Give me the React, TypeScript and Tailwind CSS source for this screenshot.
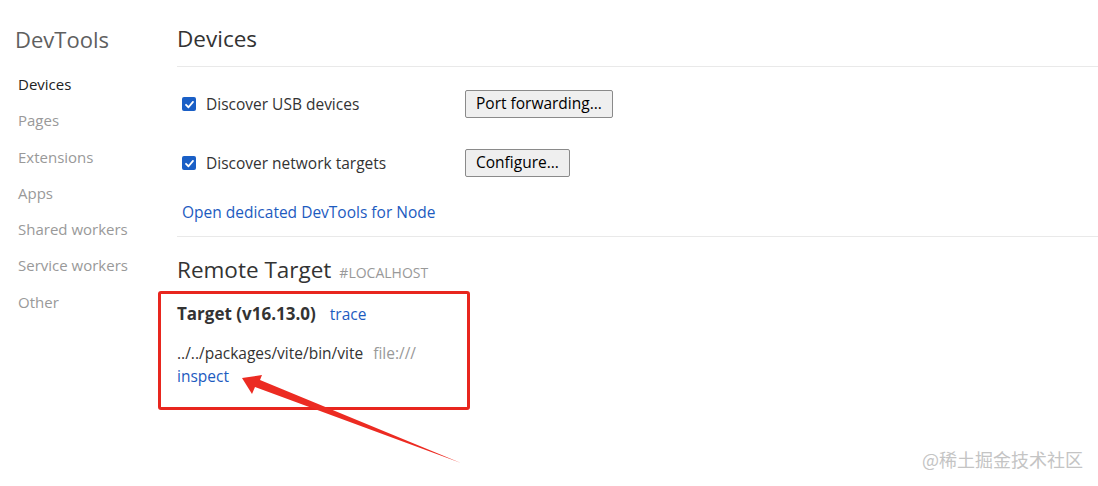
import React from "react";

const font = { fontFamily: '"Open Sans", "Noto Sans", "Noto Sans CJK SC", sans-serif' };

function Check() {
  return (
    <span className="flex h-[14px] w-[14px] shrink-0 items-center justify-center rounded-[2px] bg-[#1a5fc6]">
      <svg width="11" height="11" viewBox="0 0 12 12">
        <path d="M2.2 6.3 L4.9 9 L9.8 3.2" fill="none" stroke="white" strokeWidth="2" strokeLinecap="round" strokeLinejoin="round" />
      </svg>
    </span>
  );
}

function Row({ label, button, className }: { label: string; button: string; className?: string }) {
  return (
    <div className={"flex h-[30px] items-center " + (className ?? "")}>
      <div className="flex w-[288px] items-center pl-[5px]">
        <Check />
        <span className="ml-[10px] mt-[2px] text-[15.5px] text-[#333]">{label}</span>
      </div>
      <button className="h-[28px] rounded-[2px] border border-[#8a8a8a] bg-[#efefef] px-[10px] text-[15.5px] leading-none text-black">
        {button}
      </button>
    </div>
  );
}

export default function App() {
  const nav = ["Devices", "Pages", "Extensions", "Apps", "Shared workers", "Service workers", "Other"];
  return (
    <div className="relative flex h-[486px] w-[1098px] overflow-hidden bg-white" style={font}>
      <aside className="w-[177px] shrink-0 pl-[15px] pt-[25px]">
        <div className="text-[22px] leading-[28px] text-[#5f5f5f]">DevTools</div>
        <nav className="mt-[20px] flex flex-col pl-[3px]">
          {nav.map((n, i) => (
            <div key={n} className={"h-[36.3px] text-[15px] leading-[22px] " + (i === 0 ? "text-[#222]" : "text-[#999]")}>
              {n}
            </div>
          ))}
        </nav>
      </aside>
      <main className="flex-1">
        <div className="border-b border-[#e9e9e9] pb-[13px] pt-[25px]">
          <h1 className="text-[22.5px] leading-[28px] text-[#333]">Devices</h1>
        </div>
        <div className="border-b border-[#e9e9e9] pb-[14px]">
          <Row className="mt-[22px]" label="Discover USB devices" button="Port forwarding…" />
          <Row className="mt-[29px]" label="Discover network targets" button="Configure…" />
          <div className="mt-[24px] pl-[5px] text-[15.5px] leading-[20px] text-[#1d5bbf]">Open dedicated DevTools for Node</div>
        </div>
        <div className="mt-[19px] flex items-baseline">
          <h2 className="text-[22.5px] leading-[28px] text-[#333]">Remote Target</h2>
          <span className="ml-[8px] text-[14px] text-[#999]">#LOCALHOST</span>
        </div>
        <div className="mt-[20px] flex items-center leading-[20px]">
          <span className="text-[17px] font-bold text-[#333]">Target (v16.13.0)</span>
          <span className="ml-[14px] text-[15.5px] text-[#1d5bbf]">trace</span>
        </div>
        <div className="mt-[19px] flex text-[15.5px] leading-[20px]">
          <span className="text-[#333]">../../packages/vite/bin/vite</span>
          <span className="ml-[10px] text-[#999]">file:///</span>
        </div>
        <div className="mt-[3px] text-[15.5px] leading-[20px] text-[#1d5bbf]">inspect</div>
      </main>

      <div className="pointer-events-none absolute left-[158px] top-[291px] h-[119px] w-[312px] rounded-[3px] border-[3px] border-[#e8261e]" />
      <svg className="pointer-events-none absolute left-0 top-0" width="1098" height="486">
        <polygon points="242,378 262,375 260,380 461,463 255,387 252,394" fill="#ec2b22" />
      </svg>
      <div
        className="absolute left-[922px] top-[447px] text-[18px] leading-[24px] text-[#c4c4c4]"
        style={{ fontFamily: '"Noto Sans CJK SC", sans-serif' }}
      >
        @稀土掘金技术社区
      </div>
    </div>
  );
}
